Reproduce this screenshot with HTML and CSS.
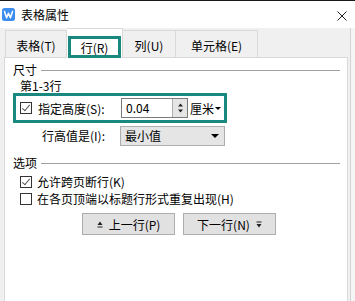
FILE: index.html
```html
<!DOCTYPE html>
<html lang="zh-CN">
  <head>
    <meta charset="UTF-8" />
    <title>表格属性</title>
    <link rel="stylesheet" href="styles.css">
  </head>
  <body>
    <div class="topline"></div>
    <div class="titlebar">
      <svg class="logo" viewBox="0 0 13 13">
        <rect x="0" y="0" width="13" height="13" rx="2.5" fill="#3e8ef0" />
        <polyline points="2.5,3.5 4.6,9.8 6.5,5.2 8.4,9.8 10.5,3.5" fill="none" stroke="#fff" stroke-width="1.5" stroke-linejoin="round" stroke-linecap="round" />
      </svg>
      <span class="title">表格属性</span>
      <svg class="close" viewBox="0 0 10 10">
        <path d="M0.5 0.5 L9.5 9.5 M9.5 0.5 L0.5 9.5" stroke="#222" stroke-width="1" />
      </svg>
    </div>
    <div class="dialog">
      <div class="main">
        <div class="tabs">
          <div class="tab t1">表格(T)</div>
          <div class="tab active"><span class="mark">行(R)</span></div>
          <div class="tab t3">列(U)</div>
          <div class="tab t4">单元格(E)</div>
        </div>
        <div class="panel">
          <div class="group"><span>尺寸</span><i></i></div>
          <div class="rows">第1-3行</div>
          <div class="height-row">
            <span class="check on"></span>
            <span class="label-s">指定高度(S):</span>
            <div class="spin">
              <span class="value">0.04</span>
              <span class="arrows">
                <svg viewBox="0 0 7 12" width="7" height="12">
                  <path d="M3.5 1.5 L6 4.5 L1 4.5 Z M1 7.5 L6 7.5 L3.5 10.5 Z" fill="#222" />
                </svg>
              </span>
            </div>
            <span class="unit">厘米<b class="caret"></b></span>
          </div>
          <div class="type-row">
            <span class="label-i">行高值是(I):</span>
            <div class="select">最小值<b class="caret big"></b></div>
          </div>
          <div class="group g2"><span>选项</span><i></i></div>
          <div class="opt"><span class="check on"></span>允许跨页断行(K)</div>
          <div class="opt"><span class="check"></span>在各页顶端以标题行形式重复出现(H)</div>
          <div class="buttons">
            <div class="btn">
              <svg viewBox="0 0 6 7" width="6" height="7"><path d="M3 0.5 L5.5 4 L0.5 4 Z M0.5 5.5 L5.5 5.5 L5.5 6.5 L0.5 6.5 Z" fill="#222" /></svg>
              上一行(P)
            </div>
            <div class="btn">
              下一行(N)
              <svg viewBox="0 0 6 7" width="6" height="7"><path d="M0.5 0.5 L5.5 0.5 L5.5 1.5 L0.5 1.5 Z M0.5 3 L5.5 3 L3 6.5 Z" fill="#222" /></svg>
            </div>
          </div>
        </div>
      </div>
      <div class="edge"></div>
    </div>
  </body>
</html>
```

FILE: styles.css
```css
* {
  box-sizing: border-box;
}
body {
  margin: 0;
  width: 355px;
  height: 301px;
  overflow: hidden;
  font-family: "Noto Sans CJK SC", "Microsoft YaHei", sans-serif;
  font-size: 12px;
  color: #000;
  background-color: #f0f0f0;
}
.topline {
  height: 1px;
  background: #1a1a1a;
}
.titlebar {
  height: 27px;
  background: #fff;
  display: flex;
  align-items: center;
  padding: 0 8px 0 2px;
}
.logo {
  width: 13px;
  height: 13px;
  margin-right: 6px;
}
.title {
  flex: 1;
  line-height: 14px;
}
.close {
  width: 10px;
  height: 10px;
  margin-top: 3px;
}
.dialog {
  display: flex;
  height: 273px;
}
.main {
  width: 348px;
  padding-left: 4px;
}
.edge {
  flex: 1;
  margin-left: 2px;
  border-left: 1px solid #d4d4d4;
  background: #f5f5f5;
}
.tabs {
  height: 29px;
  display: flex;
  align-items: flex-end;
  padding-left: 1px;
}
.tab {
  height: 27px;
  border: 1px solid #d9d9d9;
  border-bottom: none;
  display: flex;
  align-items: center;
  justify-content: center;
  background: #f0f0f0;
  padding-top: 2px;
}
.t1 {
  width: 62px;
}
.t3 {
  width: 53px;
  border-left: none;
}
.t4 {
  width: 82px;
  border-left: none;
}
.tab.active {
  width: 56px;
  height: 30px;
  margin-bottom: -1px;
  background: #fff;
  border-left: none;
  align-items: flex-end;
  padding: 0 1px 0 1px;
}
.mark {
  width: 53px;
  height: 22px;
  border: 3px solid #19897f;
  display: flex;
  align-items: center;
  justify-content: center;
}
.panel {
  height: 244px;
  background: #fff;
  border: 1px solid #d9d9d9;
  border-bottom: none;
  padding: 0 7px 0 8px;
}
.group {
  display: flex;
  align-items: center;
  height: 14px;
  margin-top: 5px;
  line-height: 14px;
}
.group i {
  flex: 1;
  height: 1px;
  background: #a0a0a0;
  margin-left: 4px;
}
.g2 {
  margin-top: 10px;
}
.rows {
  margin: 2px 0 0 7px;
  height: 14px;
  line-height: 14px;
}
.check {
  width: 12px;
  height: 12px;
  border: 1px solid #333;
  background: #fff;
  position: relative;
  flex: none;
}
.check.on::after {
  content: "";
  position: absolute;
  left: 3px;
  top: 0px;
  width: 3px;
  height: 7px;
  border: solid #555;
  border-width: 0 1px 1px 0;
  transform: rotate(40deg);
}
.height-row {
  width: 214px;
  height: 30px;
  border: 3px solid #19897f;
  display: flex;
  align-items: center;
  padding-left: 4px;
}
.label-s {
  width: 83px;
  margin-left: 6px;
}
.spin {
  display: flex;
  height: 20px;
  width: 67px;
  border: 1px solid #7a7a7a;
}
.value {
  width: 51px;
  padding-left: 4px;
  line-height: 18px;
}
.arrows {
  width: 15px;
  border-left: 1px solid #adadad;
  background: #e5e5e5;
  display: flex;
  align-items: center;
  justify-content: center;
}
.unit {
  margin-left: 2px;
  display: flex;
  align-items: center;
}
.caret {
  width: 0;
  height: 0;
  border-left: 3px solid transparent;
  border-right: 3px solid transparent;
  border-top: 3px solid #000;
  margin-left: 1px;
}
.caret.big {
  border-left-width: 4px;
  border-right-width: 4px;
  border-top-width: 4px;
  margin-left: auto;
  margin-right: 5px;
}
.type-row {
  display: flex;
  align-items: center;
  height: 21px;
  margin-top: 2px;
  padding-left: 29px;
}
.label-i {
  width: 78px;
}
.select {
  width: 105px;
  height: 20px;
  border: 1px solid #adadad;
  background: #e5e5e5;
  display: flex;
  align-items: center;
  padding-left: 4px;
}
.opt {
  display: flex;
  align-items: center;
  height: 17px;
  padding-left: 7px;
  gap: 5px;
}
.opt:first-of-type {
  margin-top: 3px;
}
.group + .opt {
  margin-top: 3px;
}
.buttons {
  display: flex;
  gap: 8px;
  margin: 6px 0 0 69px;
}
.btn {
  width: 93px;
  height: 22px;
  border: 1px solid #adadad;
  background: #e1e1e1;
  display: flex;
  align-items: center;
  justify-content: center;
  gap: 6px;
}
```
